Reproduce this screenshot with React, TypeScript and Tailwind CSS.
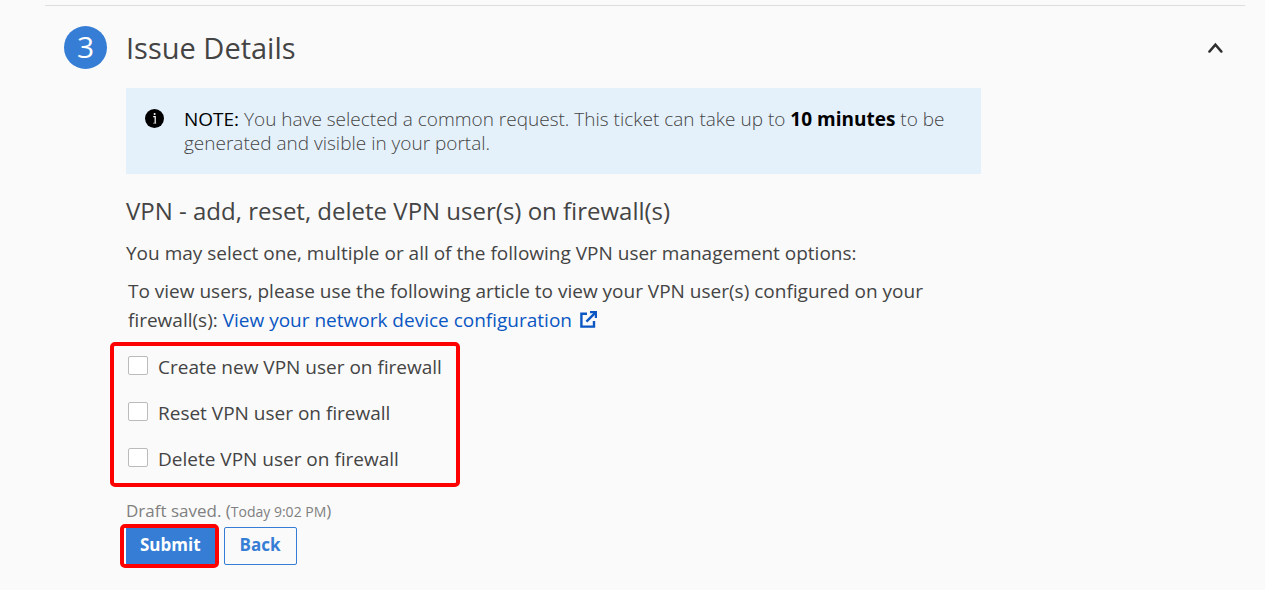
import { useState } from "react";

const options = [
  { id: "create", label: "Create new VPN user on firewall" },
  { id: "reset", label: "Reset VPN user on firewall" },
  { id: "delete", label: "Delete VPN user on firewall" },
];

function ChevronUp() {
  return (
    <svg className="h-4 w-4" viewBox="0 0 16 16" fill="none" stroke="#2f2f2f" strokeWidth="2.4" strokeLinecap="round" strokeLinejoin="miter" aria-hidden="true">
      <path d="M2.4 11.6 L8.4 4.7 L14.4 11.6" />
    </svg>
  );
}

function InfoIcon() {
  return (
    <svg className="mt-[21px] h-[19px] w-[19px] shrink-0" viewBox="0 0 19 19" aria-hidden="true">
      <circle cx="9.5" cy="9.5" r="9.5" fill="#000" />
      <circle cx="9.6" cy="5.1" r="1" fill="#fff" />
      <path d="M8.2 7.6h2v6.6" stroke="#fff" strokeWidth="1.2" fill="none" />
      <path d="M8.2 14.2h3" stroke="#fff" strokeOpacity="0.6" strokeWidth="1" fill="none" />
    </svg>
  );
}

function ExternalIcon() {
  return (
    <svg className="ml-2 inline-block h-[17px] w-[17px] align-[-1px]" viewBox="0 0 17 17" fill="none" stroke="#0a56c2" strokeWidth="2.4" aria-hidden="true">
      <path d="M7 2.8H1.4v12.8H14V10" />
      <path d="M6.4 10.6 L15.4 1.6" />
      <path d="M10 1.1h5.9v6" strokeWidth="2.2" />
    </svg>
  );
}

export default function App() {
  const [open, setOpen] = useState(true);
  const [checked, setChecked] = useState<string[]>([]);
  const toggle = (id: string) =>
    setChecked((c) => (c.includes(id) ? c.filter((x) => x !== id) : [...c, id]));

  return (
    <main className="min-h-screen bg-[#fafafa] pt-[5px] pr-5 pl-[45px] font-['Open_Sans',sans-serif] text-[19px] text-[#444]">
      <section className="border-t border-[#ddd] pt-5 pl-[19px]">
        <header className="flex items-center pr-[22px]">
          <span className="flex h-[43px] w-[43px] shrink-0 items-center justify-center rounded-full bg-[#367ed5] pb-[2px] text-[30px] leading-none text-white">
            3
          </span>
          <h1 className="ml-[19px] flex-1 text-[29px] leading-[43px]">Issue Details</h1>
          <button type="button" aria-label="Toggle section" aria-expanded={open} onClick={() => setOpen(!open)}>
            <ChevronUp />
          </button>
        </header>

        {open && (
          <div className="max-w-[917px] pt-[19px] pl-[62px]">
            <div className="flex bg-[#e4f1fb] pr-5 pb-[19px] pl-[19px]">
              <InfoIcon />
              <p className="mt-[19px] ml-5 leading-6 font-light">
                <span className="font-normal text-black">NOTE:</span> You have selected a common request. This ticket can take up to{" "}
                <strong className="font-bold text-black">10 minutes</strong> to be generated and visible in your portal.
              </p>
            </div>

            <h2 className="mt-5 text-2xl leading-[34px]">VPN - add, reset, delete VPN user(s) on firewall(s)</h2>
            <p className="mt-[10px] leading-[30px]">You may select one, multiple or all of the following VPN user management options:</p>
            <p className="mt-[9px] pl-[2px] leading-[29px]">
              To view users, please use the following article to view your VPN user(s) configured on your firewall(s):{" "}
              <a href="#configuration" className="whitespace-nowrap text-[#0a56c2]">
                View your network device configuration
                <ExternalIcon />
              </a>
            </p>

            <div className="mt-[7px] -ml-4 flex w-fit flex-col gap-[18px] rounded-[5px] border-4 border-[#f00] pt-[7px] pr-[14px] pb-[10px] pl-[14px]">
              {options.map((o) => (
                <label key={o.id} className="flex items-start gap-[10px] leading-7">
                  <input
                    type="checkbox"
                    checked={checked.includes(o.id)}
                    onChange={() => toggle(o.id)}
                    className="mt-[3px] h-[19px] w-5 appearance-none rounded-[2px] border border-[#bbb] bg-white checked:bg-[#367ed5]"
                  />
                  {o.label}
                </label>
              ))}
            </div>

            <p className="mt-3 text-[17px] leading-6 text-[#808080]">
              Draft saved. (<span className="text-[14px]">Today 9:02 PM</span>)
            </p>
            <div className="-ml-[6px] flex items-center gap-[5px]">
              <div className="rounded-[5px] border-4 border-[#f00] bg-white pl-[2px]">
                <button type="button" className="block h-9 bg-[#367ed5] px-[14px] pb-[2px] text-[17px] font-bold text-white">
                  Submit
                </button>
              </div>
              <button type="button" className="h-[38px] rounded-[2px] border border-[#367ed5] px-[15px] pb-[2px] text-[17px] font-bold text-[#367ed5]">
                Back
              </button>
            </div>
          </div>
        )}
      </section>
    </main>
  );
}
